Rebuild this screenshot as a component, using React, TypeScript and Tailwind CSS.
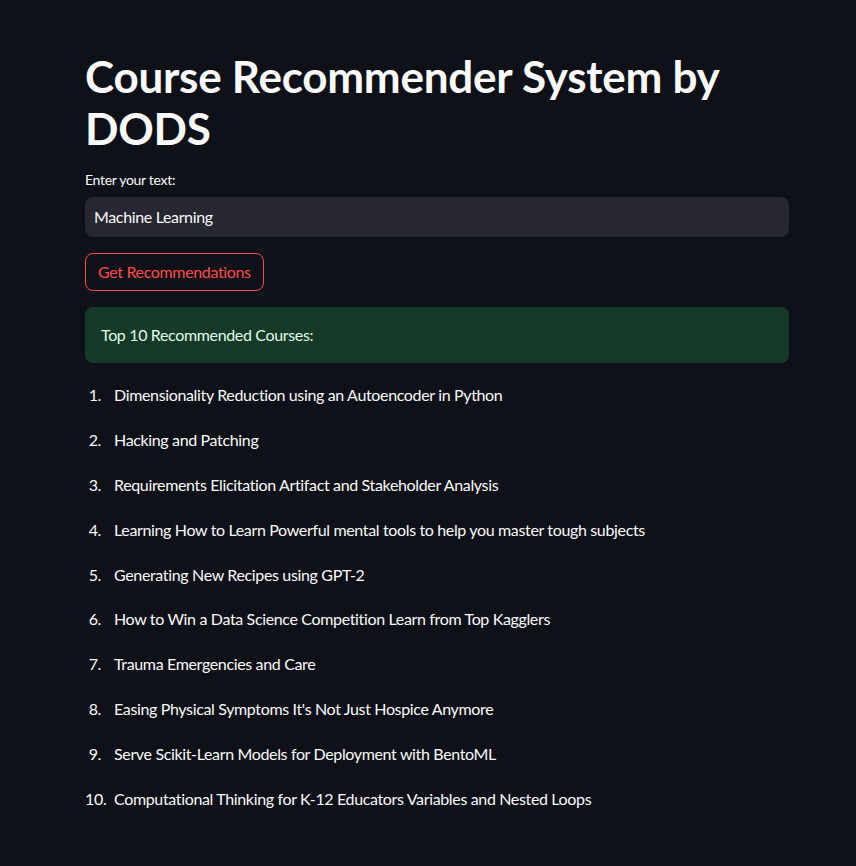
import React from "react";

const courses = [
  "Dimensionality Reduction using an Autoencoder in Python",
  "Hacking and Patching",
  "Requirements Elicitation Artifact and Stakeholder Analysis",
  "Learning How to Learn Powerful mental tools to help you master tough subjects",
  "Generating New Recipes using GPT-2",
  "How to Win a Data Science Competition Learn from Top Kagglers",
  "Trauma Emergencies and Care",
  "Easing Physical Symptoms It's Not Just Hospice Anymore",
  "Serve Scikit-Learn Models for Deployment with BentoML",
  "Computational Thinking for K-12 Educators Variables and Nested Loops",
];

export default function App() {
  return (
    <div
      className="min-h-[866px] w-full bg-[#0e1117] text-[#fafafa]"
      style={{ fontFamily: "Lato, 'Noto Sans', sans-serif" }}
    >
      <div className="ml-[85px] w-[704px] pt-[50px]">
        <h1 className="text-[44px] font-bold leading-[52px] tracking-[-0.25px] text-[#fafafa]">
          Course Recommender System by DODS
        </h1>
        <div className="mt-[16px] text-[14px] leading-[20px] tracking-[-0.3px] text-[#fafafa]">Enter your text:</div>
        <div className="mt-[7px] flex h-[40px] items-center rounded-[8px] bg-[#262730] px-[9px] text-[16px] tracking-[-0.35px]">
          Machine Learning
        </div>
        <div className="mt-[16px]">
          <button className="h-[38px] rounded-[8px] border border-[#ff4b4b] bg-transparent px-[12px] text-[16px] tracking-[-0.35px] text-[#ff4b4b]">
            Get Recommendations
          </button>
        </div>
        <div className="mt-[16px] flex h-[56px] items-center rounded-[8px] bg-[#173928] px-[16px] text-[16px] tracking-[-0.35px] text-[#dffde9]">
          Top 10 Recommended Courses:
        </div>
        <ol className="mt-[10px]">
          {courses.map((c, i) => (
            <li key={i} className="flex h-[44.8px] items-center text-[16px] tracking-[-0.35px]">
              <span className="w-[29px] shrink-0 pr-[13px] text-right">{i + 1}.</span>
              <span>{c}</span>
            </li>
          ))}
        </ol>
      </div>
    </div>
  );
}
